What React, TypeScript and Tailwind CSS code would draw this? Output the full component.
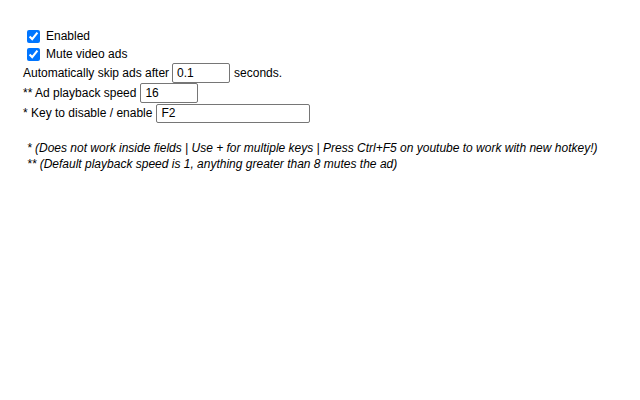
import React from "react";

export default function App() {
  const font = { fontFamily: '"Liberation Sans", Arial, sans-serif' };
  return (
    <div className="w-[640px] h-[400px] bg-white text-black text-[12px] pl-[23px] pt-[27px]" style={font}>
      <div className="flex items-center h-[18px]">
        <input type="checkbox" defaultChecked className="w-[13px] h-[13px] ml-[4px] mr-[6px] accent-[#0075ff]" />
        <span>Enabled</span>
      </div>
      <div className="flex items-center h-[18px]">
        <input type="checkbox" defaultChecked className="w-[13px] h-[13px] ml-[4px] mr-[6px] accent-[#0075ff]" />
        <span>Mute video ads</span>
      </div>
      <div className="flex items-center h-[20px]">
        <span>Automatically skip ads after</span>
        <input
          type="text"
          defaultValue="0.1"
          className="ml-[3px] w-[58px] h-[20px] border border-[#767676] rounded-[2px] px-[4px] text-[12px] outline-none"
          style={font}
        />
        <span className="ml-[4px]">seconds.</span>
      </div>
      <div className="flex items-center h-[20px]">
        <span>** Ad playback speed</span>
        <input
          type="text"
          defaultValue="16"
          className="ml-[4px] w-[58px] h-[20px] border border-[#767676] rounded-[2px] px-[4px] text-[12px] outline-none"
          style={font}
        />
      </div>
      <div className="flex items-center h-[20px]">
        <span>* Key to disable / enable</span>
        <input
          type="text"
          defaultValue="F2"
          className="ml-[4px] w-[154px] h-[19px] border border-[#767676] rounded-[2px] px-[4px] text-[12px] outline-none"
          style={font}
        />
      </div>
      <div className="pl-[4px] pt-[17px] italic leading-[16px]">
        <div>* (Does not work inside fields | Use + for multiple keys | Press Ctrl+F5 on youtube to work with new hotkey!)</div>
        <div>** (Default playback speed is 1, anything greater than 8 mutes the ad)</div>
      </div>
    </div>
  );
}
